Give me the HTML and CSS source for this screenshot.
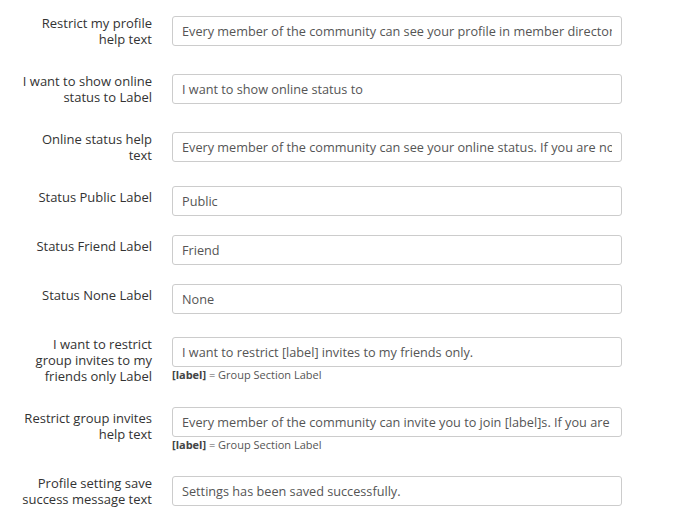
FILE: index.html
```html
<!DOCTYPE html>
<html lang="en">
<head>
<meta charset="utf-8">
<title>Profile settings labels</title>
<link rel="stylesheet" href="styles.css">
</head>
<body>
<form class="form">
  <div class="row">
    <label class="lbl">Restrict my profile help text</label>
    <div class="field"><input class="inp" type="text" value="Every member of the community can see your profile in member directory. If you are not comfortable with that, you can restrict it."></div>
  </div>
  <div class="row">
    <label class="lbl">I want to show online status to Label</label>
    <div class="field"><input class="inp" type="text" value="I want to show online status to"></div>
  </div>
  <div class="row">
    <label class="lbl">Online status help text</label>
    <div class="field"><input class="inp" type="text" value="Every member of the community can see your online status. If you are not comfortable with that, you can restrict it."></div>
  </div>
  <div class="row">
    <label class="lbl">Status Public Label</label>
    <div class="field"><input class="inp" type="text" value="Public"></div>
  </div>
  <div class="row">
    <label class="lbl">Status Friend Label</label>
    <div class="field"><input class="inp" type="text" value="Friend"></div>
  </div>
  <div class="row">
    <label class="lbl">Status None Label</label>
    <div class="field"><input class="inp" type="text" value="None"></div>
  </div>
  <div class="row">
    <label class="lbl">I want to restrict group invites to my friends only Label</label>
    <div class="field">
      <input class="inp" type="text" value="I want to restrict [label] invites to my friends only.">
      <div class="hint"><b>[label]</b> = Group Section Label</div>
    </div>
  </div>
  <div class="row">
    <label class="lbl">Restrict group invites help text</label>
    <div class="field">
      <input class="inp" type="text" value="Every member of the community can invite you to join [label]s. If you are not comfortable with that, you can restrict it.">
      <div class="hint"><b>[label]</b> = Group Section Label</div>
    </div>
  </div>
  <div class="row">
    <label class="lbl">Profile setting save success message text</label>
    <div class="field"><input class="inp" type="text" value="Settings has been saved successfully."></div>
  </div>
</form>
</body>
</html>
```
FILE: styles.css
```css
html, body {
  background: #ffffff;
}
body {
  margin: 8px 0 0 0;
  font-family: "Open Sans", "Noto Sans", sans-serif;
  font-size: 13px;
  color: #333333;
}
.form {
  margin: 0;
  padding-left: 20px;
}
.row {
  display: flex;
  gap: 20px;
  margin-bottom: 11px;
}
.lbl {
  flex: none;
  width: 132px;
  text-align: right;
  line-height: 16px;
  padding: 7px 0 8px;
  align-self: flex-start;
}
.field {
  flex: none;
  width: 450px;
  align-self: center;
  padding: 3.9px 0 4.1px;
}
.inp {
  display: block;
  width: 100%;
  height: 30px;
  box-sizing: border-box;
  margin: 0;
  border: 1px solid #cccccc;
  border-radius: 3px;
  padding: 0 9px;
  font-family: "Open Sans", "Noto Sans", sans-serif;
  font-size: 12.7px;
  color: #555555;
  background: #ffffff;
  outline: none;
}
.hint {
  font-size: 11px;
  line-height: 16px;
  color: #555555;
}
.hint b {
  color: #444444;
}
```
